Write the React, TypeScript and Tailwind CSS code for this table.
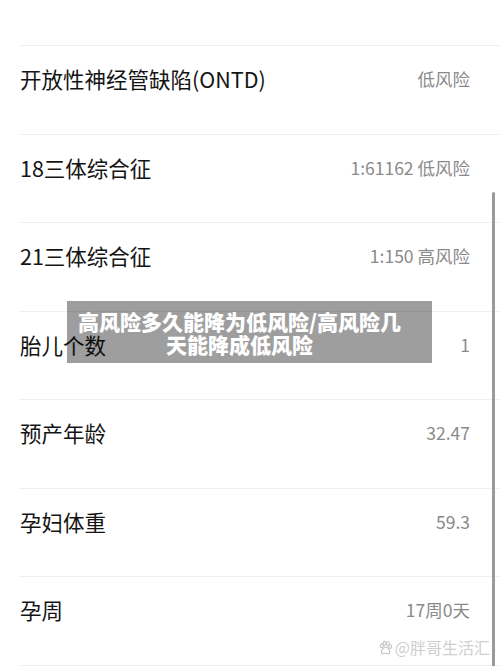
import React from 'react';

const rows = [
  { label: '检测结果', value: '' },
  { label: '开放性神经管缺陷(ONTD)', value: '低风险' },
  { label: '18三体综合征', value: '1:61162 低风险' },
  { label: '21三体综合征', value: '1:150 高风险' },
  { label: '胎儿个数', value: '1' },
  { label: '预产年龄', value: '32.47' },
  { label: '孕妇体重', value: '59.3' },
  { label: '孕周', value: '17周0天' },
  { label: '', value: '' },
];

function Paw() {
  return (
    <svg width="15" height="15" viewBox="0 0 16 16" fill="none" stroke="#c4c4c4" strokeWidth="1.2">
      <ellipse cx="4" cy="6" rx="1.6" ry="2" />
      <ellipse cx="7" cy="3.5" rx="1.6" ry="2" />
      <ellipse cx="10.5" cy="3.8" rx="1.6" ry="2" />
      <ellipse cx="13" cy="7" rx="1.5" ry="1.9" />
      <path d="M8.5 7.5c-2.5 0-5 3.5-5 5.5 0 1.5 1.5 1.8 3 1.4 1-.3 2-.3 3 0 1.5.4 3 0 3-1.4 0-2-2-5.5-4-5.5z" />
    </svg>
  );
}

export default function App() {
  return (
    <div
      className="relative w-[500px] h-[666px] overflow-hidden bg-white"
      style={{ fontFamily: '"Noto Sans CJK SC", "Noto Sans", sans-serif' }}
    >
      <div className="mt-[-43.5px] pl-[19px]">
        {rows.map((r, i) => (
          <div
            key={i}
            className={`h-[88.5px] flex items-center justify-between pr-[30px] ${
              i === 0 ? 'pb-[28px]' : 'pb-[21px] border-t border-[#efefef]'
            }`}
          >
            <span className="pl-px text-[21.5px] leading-7 text-[#141414]">{r.label}</span>
            <span className="text-[17.5px] leading-7 text-[#8a8a8a]">{r.value}</span>
          </div>
        ))}
      </div>

      <div className="absolute left-[67px] top-[301px] w-[365px] h-[62px] bg-[rgba(0,0,0,0.38)] pl-[8px] pr-[28px] pt-[9px] text-center text-[21px] leading-[23px] font-black text-white">
        高风险多久能降为低风险/高风险几天能降成低风险
      </div>

      <div className="absolute right-[5px] top-[192px] w-[3px] h-[480px] rounded-full bg-[#9a9a9a]" />

      <div className="absolute right-[10px] top-[637px] flex items-center gap-[2px] text-[16px] leading-5 text-[#cfcfcf]">
        <Paw />
        <span>@胖哥生活汇</span>
      </div>
    </div>
  );
}
